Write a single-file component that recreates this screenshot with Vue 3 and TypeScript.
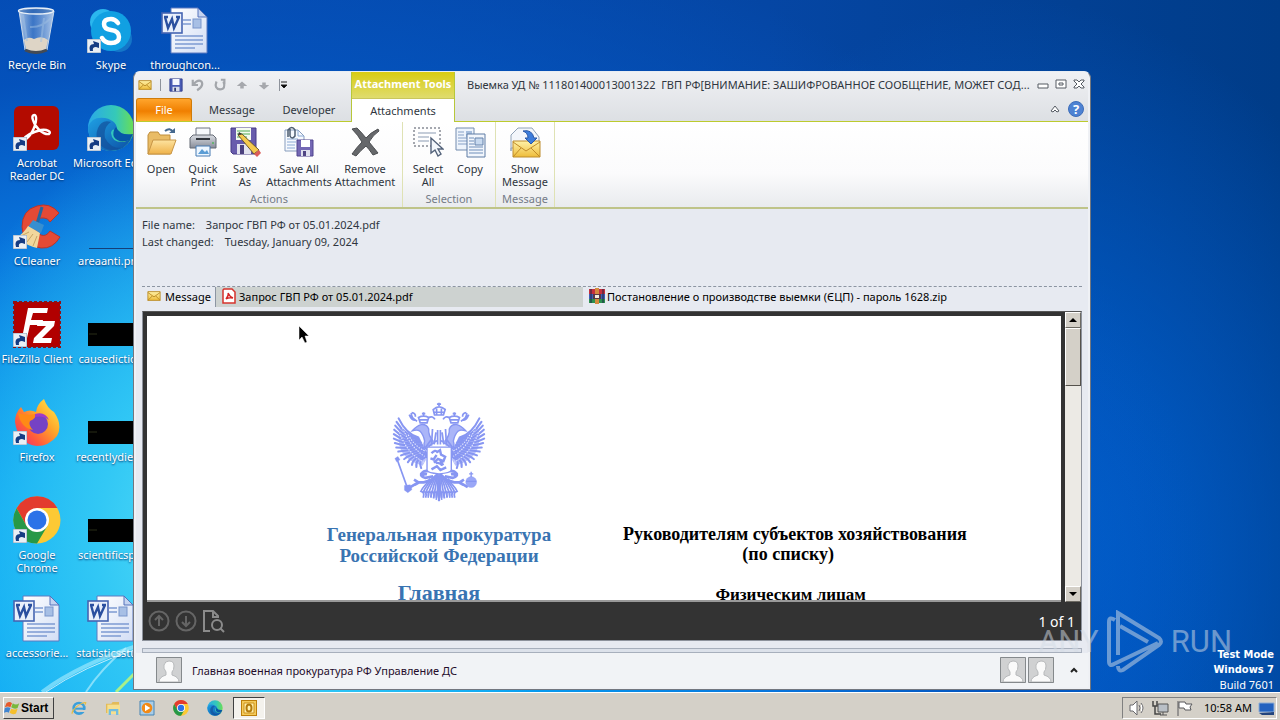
<script setup lang="ts">
interface Shortcut { icon: string; label: string; link?: boolean; col: number; row: number }
interface Tool { icon: string; lines: string[]; size?: string }
interface Group { name: string; tools: Tool[] }

const shortcuts: Shortcut[] = [
  { icon: 'bin', label: 'Recycle Bin', col: 1, row: 1 },
  { icon: 'acrobat', label: 'Acrobat Reader DC', link: true, col: 1, row: 2 },
  { icon: 'ccleaner', label: 'CCleaner', link: true, col: 1, row: 3 },
  { icon: 'filezilla', label: 'FileZilla Client', link: true, col: 1, row: 4 },
  { icon: 'firefox', label: 'Firefox', link: true, col: 1, row: 5 },
  { icon: 'chrome', label: 'Google Chrome', link: true, col: 1, row: 6 },
  { icon: 'word', label: 'accessorie...', col: 1, row: 7 },
  { icon: 'skype', label: 'Skype', link: true, col: 2, row: 1 },
  { icon: 'edge', label: 'Microsoft\u00a0Edge', link: true, col: 2, row: 2 },
  { icon: 'line', label: 'areaanti.png', col: 2, row: 3 },
  { icon: 'black', label: 'causediction', col: 2, row: 4 },
  { icon: 'black', label: 'recentlydiet...', col: 2, row: 5 },
  { icon: 'black', label: 'scientificsp...', col: 2, row: 6 },
  { icon: 'word', label: 'statisticsstu...', col: 2, row: 7 },
  { icon: 'word', label: 'throughcon...', col: 3, row: 1 },
]

const groups: Group[] = [
  {
    name: 'Actions',
    tools: [
      { icon: 'open', lines: ['Open'] },
      { icon: 'print', lines: ['Quick', 'Print'] },
      { icon: 'saveas', lines: ['Save', 'As'] },
      { icon: 'saveall', lines: ['Save All', 'Attachments'], size: 'wide' },
      { icon: 'remove', lines: ['Remove', 'Attachment'], size: 'wide' },
    ],
  },
  {
    name: 'Selection',
    tools: [
      { icon: 'select', lines: ['Select', 'All'] },
      { icon: 'copy', lines: ['Copy'] },
    ],
  },
  { name: 'Message', tools: [{ icon: 'show', lines: ['Show', 'Message'], size: 'mid' }] },
]

const pinned = ['ie', 'folder', 'media', 'chrome', 'edge']
const quick = ['undo', 'redo', 'up', 'down']
const feathers = [
  [72, 84], [66, 94], [62, 105], [59, 117], [58, 130], [58, 143], [61, 156], [65, 169],
  [71, 181], [79, 192], [88, 203], [99, 212], [111, 220], [124, 226], [138, 229],
]
const tail = [136, 143, 150, 158, 166, 174, 182, 189]
</script>

<template>
  <div class="desktop">
    <svg class="sprite" aria-hidden="true">
      <defs>
        <linearGradient id="gGlass" x1="0" x2="1"><stop offset="0" stop-color="#dfeaf5" stop-opacity=".8" /><stop offset=".4" stop-color="#7fa5d8" stop-opacity=".45" /><stop offset="1" stop-color="#dce8f6" stop-opacity=".8" /></linearGradient>
        <linearGradient id="gFox" x1="1" y1="0" x2="0" y2="1"><stop offset="0" stop-color="#fff44f" /><stop offset=".4" stop-color="#ffa62a" /><stop offset=".7" stop-color="#ff5a3c" /><stop offset="1" stop-color="#e8208a" /></linearGradient>
        <linearGradient id="gEdge" x1="0" y1="0" x2="1" y2="0"><stop offset="0" stop-color="#2aa9e8" /><stop offset=".6" stop-color="#35c9b8" /><stop offset="1" stop-color="#6ade55" /></linearGradient>
        <linearGradient id="gEdge2" x1="0" y1="0" x2="1" y2="1"><stop offset="0" stop-color="#1fa0e4" /><stop offset="1" stop-color="#0c50a4" /></linearGradient>
        <linearGradient id="gFold" x1="0" y1="0" x2="0" y2="1"><stop offset="0" stop-color="#fde3a0" /><stop offset="1" stop-color="#efb24a" /></linearGradient>
        <linearGradient id="gPage" x1="0" y1="0" x2="1" y2="1"><stop offset="0" stop-color="#fff" /><stop offset="1" stop-color="#d3def5" /></linearGradient>
        <linearGradient id="gEnv" x1="0" y1="0" x2="0" y2="1"><stop offset="0" stop-color="#fff2a8" /><stop offset="1" stop-color="#eebc3a" /></linearGradient>
        <linearGradient id="gGrey" x1="0" y1="0" x2="0" y2="1"><stop offset="0" stop-color="#d9dce2" /><stop offset="1" stop-color="#878c98" /></linearGradient>
      </defs>
      <symbol id="bin" viewBox="0 0 48 48">
        <path d="M6 5 12 44Q23 49 34 44L41 5Q23 0 6 5Z" fill="url(#gGlass)" stroke="#c9d9ea" />
        <path d="M11 34Q15 30 21 33 29 29 35 34L33 43Q23 48 13 43Z" fill="#ded5c6" />
        <path d="M12 44Q23 49 34 44" fill="none" stroke="#444b55" stroke-width="3" />
        <ellipse cx="23" cy="5" rx="17.500" ry="3" fill="#2b62ae" fill-opacity=".6" stroke="#e7eff7" stroke-width="1.400" />
        <path d="M10 9 14 35M38 12Q28 22 17 21M31 12 28 36" fill="none" stroke="#9fbfe2" stroke-width="2" opacity=".5" />
      </symbol>
      <symbol id="skype" viewBox="0 0 48 48">
        <circle cx="16" cy="16" r="13" fill="#2bb7ee" /><circle cx="32" cy="33" r="13" fill="#1476c8" />
        <circle cx="24" cy="25" r="20" fill="#11a0e2" />
        <path d="M31 17Q28 13 24 13 17 13 17 18 17 23 24 24 32 25 32 31 32 37 24 37 18 37 15 32" fill="none" stroke="#fff" stroke-width="4.500" stroke-linecap="round" />
      </symbol>
      <symbol id="word" viewBox="0 0 48 48">
        <path d="M10 2H37L46 11V47H10Z" fill="url(#gPage)" stroke="#5d7ac0" />
        <path d="M37 2V11H46Z" fill="#c4d3f0" stroke="#5572bb" />
        <path d="M22 14H30M22 18H30M14 30H42M14 34H42M14 38H42M14 42H34" stroke="#7e9bd2" stroke-width="1.500" />
        <rect x="32" y="13" width="8" height="9" fill="#a7bfe5" stroke="#7895cb" />
        <rect x="1" y="7" width="20" height="20" fill="#e9effb" stroke="#4565b2" stroke-width="1.600" />
        <path d="M4 11 7 22 11 13 13 22 18 11M3 11H7M15 11H19" fill="none" stroke="#2a4f9f" stroke-width="2.400" />
      </symbol>
      <symbol id="acrobat" viewBox="0 0 48 48">
        <rect x="1" y="2" width="45" height="44" rx="6" fill="#b30b00" />
        <path d="M13 35C19 31 24 19 23 13 22 9 18 11 20 16 23 25 31 31 36 30 39 28 34 25 28 26 20 28 12 32 10 36 10 39 12 37 14 34Z" fill="none" stroke="#fff" stroke-width="2.400" />
      </symbol>
      <symbol id="edge" viewBox="0 0 48 48">
        <circle cx="24" cy="24" r="23" fill="url(#gEdge)" />
        <path d="M1 23Q5 12 18 14 31 17 30 27 25 23 24 29 25 39 37 38L44 35Q37 48 22 47 2 44 1 23Z" fill="url(#gEdge2)" />
        <path d="M11 24Q15 15 24 18 16 23 18 34 23 44 34 44 19 50 11 38Q8 31 11 24Z" fill="#134d98" opacity=".65" />
        <path d="M29 23Q33 32 46 30L43 36Q32 40 27 33 25 28 29 23Z" fill="#0756a7" />
      </symbol>
      <symbol id="ccleaner" viewBox="0 0 48 48">
        <path d="M46 11Q37 0 24 4 9 8 9 25 10 44 28 46 40 47 47 35L37 29Q33 35 28 33 22 31 23 22 24 15 31 16 35 16 37 20Z" fill="#e44a35" stroke="#bc3328" />
        <path d="M29 5 24 22" stroke="#2366a0" stroke-width="3" /><path d="M20 18 31 23 28 31 15 25Z" fill="#378fd0" />
        <path d="M15 24 27 31 24 46Q15 44 3 36 11 31 15 24Z" fill="#f1d79c" /><path d="M8 34 16 30M14 40 20 32M20 44 24 34" stroke="#c7a563" />
      </symbol>
      <symbol id="filezilla" viewBox="0 0 48 48">
        <rect x="1" y="2" width="46" height="45" fill="#b10000" stroke="#8f1014" stroke-width="2" stroke-dasharray="3 2" />
        <path d="M9 38 15 8H35L34 13H20L18 20H30L29 25H17L14 38ZM25 21H42L41 26 29 38H39L38 43H20L21 38 33 26H24Z" fill="#fff" />
      </symbol>
      <symbol id="firefox" viewBox="0 0 48 48">
        <path d="M2 24Q2 15 8 9L11 14Q17 11 23 14 24 6 31 1 34 10 41 14 50 27 44 38 36 48 24 48 5 46 2 24Z" fill="url(#gFox)" />
        <circle cx="25" cy="26" r="10" fill="#7542c4" />
        <path d="M5 15Q14 18 22 16 24 20 17 23 15 27 20 32 8 30 5 15Z" fill="#ff8a16" />
        <path d="M22 16Q32 13 36 22 30 17 22 19Z" fill="#a13ac9" />
      </symbol>
      <symbol id="chrome" viewBox="0 0 48 48">
        <circle cx="24" cy="24" r="23.500" fill="#fcc934" />
        <path d="M24 24V12H44.400A23.500 23.500 0 0 0 3.600 12.200L13.600 30Z" fill="#e33b2e" />
        <path d="M3.600 12.200A23.500 23.500 0 0 0 24 47.500L34.400 30 13.600 30Z" fill="#279847" />
        <circle cx="24" cy="24" r="12" fill="#fff" /><circle cx="24" cy="24" r="9.500" fill="#2b72e8" />
      </symbol>
      <symbol id="black" viewBox="0 0 48 48"><path d="M1 23H48V46H1Z" /><path d="M2 34H10" stroke="#282d16" /></symbol>
      <symbol id="line" viewBox="0 0 48 48"><path d="M2 46.500H48" stroke="#153f78" /></symbol>
      <symbol id="shortcut" viewBox="0 0 14 14"><path d="M0 0H14V14H0Z" fill="#e9eff5" stroke="#90a4ba" /><path d="M3 12Q1 5 7 5L6 2 12 4 12 9 9 8Q5 8 6 12Z" fill="#153c83" /></symbol>

      <symbol id="envelope" viewBox="0 0 16 12"><path d="M1 1H15V11H1Z" fill="url(#gEnv)" stroke="#b98a24" /><path d="M1 2 8 7 15 2M1 11 6 6M15 11 10 6" fill="none" stroke="#b88922" /></symbol>
      <symbol id="floppy" viewBox="0 0 16 16"><path d="M1 1H15V15H1Z" fill="#4a5cb5" stroke="#2e3d8c" /><path d="M4 1H12V8H4Z" fill="#f5f7ff" /><path d="M4 10H12V15H4Z" fill="#d7dcea" /><path d="M6 11H8V15H6Z" fill="#303a71" /></symbol>
      <symbol id="undo" viewBox="0 0 16 16"><path d="M2 2V8H8M3 7Q8 1 12 4 15 9 7 14" fill="none" stroke="#a3a6ab" stroke-width="2.500" /></symbol>
      <symbol id="redo" viewBox="0 0 16 16"><path d="M9 2H13V7M12 4Q15 13 8 13 1 12 4 4" fill="none" stroke="#a3a6ab" stroke-width="2.500" /></symbol>
      <symbol id="up" viewBox="0 0 16 16"><path d="M8 4 14 9H10V12H6V9H2Z" fill="#a6a8ad" /></symbol>
      <symbol id="down" viewBox="0 0 16 16"><path d="M8 13 14 8H10V5H6V8H2Z" fill="#a6a8ad" /></symbol>

      <symbol id="open" viewBox="0 0 32 32">
        <path d="M3 28V9L5 6H13L15 9H25V28Z" fill="#e9bc66" stroke="#c08e3c" /><path d="M3 28 8 14H31L26 28Z" fill="url(#gFold)" stroke="#c79546" />
        <path d="M20 5Q25 1 28 6" fill="none" stroke="#46698f" stroke-width="2" /><path d="M24 7H30V2Z" fill="#46698f" />
      </symbol>
      <symbol id="print" viewBox="0 0 32 32">
        <path d="M9 2H23V13H9Z" fill="#f7f9fc" stroke="#6f7581" /><path d="M3 12 6 9H26L29 12V22H3Z" fill="url(#gGrey)" stroke="#656a75" />
        <path d="M9 13H23" stroke="#30343b" stroke-width="2" /><circle cx="26" cy="17" r="1" fill="#55b45e" />
        <path d="M9 20H23V30H9Z" fill="#edf6ff" stroke="#477bb3" /><path d="M11 28 15 23 18 26 20 24 22 28Z" fill="#5b9dd5" />
      </symbol>
      <symbol id="saveas" viewBox="0 0 32 32">
        <path d="M2 2H27V28H4L2 26Z" fill="#685cac" stroke="#473b86" /><path d="M7 2H22V14H7Z" fill="#f5fbef" /><path d="M8 5H21M8 8H21M8 11H18" stroke="#4eaa54" />
        <path d="M8 18H22V28H8Z" fill="#e2e3ef" /><path d="M11 19H15V28H11Z" fill="#4c427e" /><path d="M9 9 25 28 30 24 13 8Z" fill="#f5ca4d" stroke="#6c5930" /><path d="M25 28 28 31 32 27 30 24Z" fill="#db5d59" /><path d="m9 9 1-3 3 2Z" fill="#333" />
      </symbol>
      <symbol id="saveall" viewBox="0 0 32 32">
        <path d="M2 4H15L21 10V25H2Z" fill="#f6f9fe" stroke="#879dbd" /><path d="M15 4V10H21M4 13H15M4 16H13M4 19H12M4 22H12" fill="none" stroke="#8baad4" />
        <path d="M7 3V10Q9 14 12 10V4Q9 -1 5 4V11" fill="none" stroke="#4d5d70" stroke-width="1.500" />
        <path d="M14 14H30V30H14Z" fill="#7468b4" stroke="#51458e" /><path d="M18 14H27V21H18Z" fill="#fff" /><path d="M18 24H27V30H18Z" fill="#dfe0ed" /><path d="M20 25H23V30H20Z" fill="#504583" />
      </symbol>
      <symbol id="remove" viewBox="0 0 32 32"><path d="M3 3 8 2Q13 7 17 12 21 7 29 3L30 5Q24 9 20 16 25 22 29 27L24 29Q20 23 17 20 12 24 7 30L3 28Q8 21 13 16 9 9 3 3Z" fill="#66686b" stroke="#4b4d50" /></symbol>
      <symbol id="select" viewBox="0 0 32 32">
        <path d="M2 2H28V20H2Z" fill="none" stroke="#4c5360" stroke-dasharray="2 2" /><path d="M6 7H24M6 11H17M6 15H17" stroke="#8b9bb2" />
        <path d="M19 12V27L23 24 26 30 29 28 26 23H31Z" fill="#f2f6fb" stroke="#53627a" stroke-width="1.400" />
      </symbol>
      <symbol id="copy" viewBox="0 0 32 32">
        <path d="M2 2H20V24H2Z" fill="#eef4fc" stroke="#728bae" /><path d="M4 6H10M4 9H10M4 12H17M4 15H17M4 18H15" stroke="#86a0c6" /><path d="M12 5H18V11H12Z" fill="#a5bddd" />
        <path d="M13 8H31V31H13Z" fill="#f2f6fc" stroke="#5e7da5" /><path d="M15 12H20M15 15H20M15 18H20M15 21H29M15 24H29M15 27H29" stroke="#6f8eb9" /><path d="M21 12H29V19H21Z" fill="#c7d9ef" stroke="#6582ab" />
      </symbol>
      <symbol id="show" viewBox="0 0 32 32">
        <path d="M2 25V9L9 2H23L30 11V22H2Z" fill="#f3f6fb" stroke="#92a3b8" /><path d="M4 15H31V31H4Z" fill="url(#gEnv)" stroke="#bd8c2d" /><path d="M4 16 17 25 31 16M4 31 12 22M31 31 22 22" fill="none" stroke="#c08b28" />
        <path d="M14 5Q23 3 25 12H28L22 18 16 12H19Q19 7 14 5Z" fill="#3c7cdb" stroke="#2b58a7" />
      </symbol>
      <symbol id="pdf" viewBox="0 0 14 16"><path d="M2 1H10L13 4V15H1V2Z" fill="#fff" stroke="#d6332d" stroke-width="1.500" /><path d="M4 11Q7 7 6 5 8 9 11 10 7 9 4 11" fill="none" stroke="#d32323" stroke-width="1.500" /></symbol>
      <symbol id="rar" viewBox="0 0 16 16"><path d="M0 1H16V6H0Z" fill="#c5303f" /><path d="M0 6H16V11H0Z" fill="#3e5db5" /><path d="M0 11H16V15H0Z" fill="#2c9150" /><path d="M6 0H10V16H6Z" fill="#d48b3f" /><path d="M4 6H12V11H4Z" fill="#593844" /><path d="M6 7H10V10H6Z" fill="#f5efdf" /><path d="M2 1V15M14 1V15" stroke="#1e2544" /></symbol>
      <symbol id="person" viewBox="0 0 26 26"><path d="M0 0H26V26H0Z" fill="#d0d1d2" /><path d="M3 25Q3 20 10 18V15Q7 11 8 8 9 4 13 4 18 4 18 9 18 13 16 15V18Q23 20 23 25Z" fill="#fafafa" stroke="#b7b9bb" /><path d="M.500 .500H25.500V25.500H.500Z" fill="none" stroke="#85898c" /></symbol>
      <symbol id="flag" viewBox="0 0 20 20"><path d="M3 4Q7 1 10 4L8 9Q5 7 1 9Z" fill="#e6592b" /><path d="M11 4Q15 7 19 4L17 10Q13 12 9 9Z" fill="#79b83b" /><path d="M1 10Q5 8 8 10L6 16Q4 14 0 16Z" fill="#3f85d1" /><path d="M9 11Q13 13 17 11L15 17Q11 19 7 16Z" fill="#f5bf2c" /></symbol>
      <symbol id="ie" viewBox="0 0 48 48"><circle cx="24" cy="25" r="16" fill="none" stroke="#3b9fdb" stroke-width="8" /><path d="M11 26H42" stroke="#3b9fdb" stroke-width="6" /><path d="M30 30H45V36H30Z" fill="#d4d0c8" /><path d="M3 43Q-3 35 16 19 39 2 46 7 48 11 39 18 48 5 31 12 8 25 4 42Z" fill="#e7bd43" /></symbol>
      <symbol id="folder" viewBox="0 0 48 48"><path d="M3 11H19L23 6H42V39H3Z" fill="#e2bb59" /><path d="M7 14H45V42H7Z" fill="#f7df8e" /><path d="M11 27H40V45H33V34H18V45H11Z" fill="#72bde0" /></symbol>
      <symbol id="media" viewBox="0 0 48 48"><path d="M3 3H45V45H3Z" fill="#a9cde8" stroke="#4685b5" stroke-width="3" /><circle cx="24" cy="24" r="16" fill="#f28a17" /><path d="M18 14 34 24 18 34Z" fill="#fff" /></symbol>
      <symbol id="outlook" viewBox="0 0 16 16"><path d="M0 0H16V16H0Z" fill="#f4ca59" stroke="#bd800b" stroke-width="2" /><path d="M3 3H13V13H3Z" fill="#fff1af" stroke="#cc901c" /><ellipse cx="8" cy="8" rx="2.500" ry="3.500" fill="none" stroke="#b47b0b" stroke-width="2" /></symbol>
    </svg>

    <main class="workspace">
      <svg class="rays" viewBox="0 0 140 120" aria-hidden="true">
        <path d="M42 120Q80 92 140 73" stroke="#b8f2ff" stroke-width="4" fill="none" opacity=".55" />
        <path d="M46 120Q82 95 140 76" stroke="#fff" fill="none" opacity=".7" />
        <path d="M86 120Q100 98 126 76" stroke="#d2f7ff" stroke-width="2" fill="none" opacity=".55" />
        <path d="M116 120 140 96" stroke="#a9f08a" stroke-width="3" />
      </svg>

      <nav class="shortcuts" aria-label="Desktop">
        <button v-for="s in shortcuts" :key="s.label" type="button" class="shortcut" :style="{ gridColumn: s.col, gridRow: s.row }">
          <span class="pic">
            <svg class="i48"><use :href="'#' + s.icon" /></svg>
            <svg v-if="s.link" class="arrow"><use href="#shortcut" /></svg>
          </span>
          <span class="name">{{ s.label }}</span>
        </button>
      </nav>

      <div class="edition"><b>Test Mode</b><b>Windows 7</b><span>Build 7601</span></div>

      <section class="window" aria-label="Outlook message">
        <header class="chrome-top">
          <div class="left-top">
            <div class="quickbar">
              <svg class="mail"><use href="#envelope" /></svg>
              <span class="vline"></span>
              <button type="button" aria-label="Save"><svg class="i14"><use href="#floppy" /></svg></button>
              <button v-for="q in quick" :key="q" type="button" :aria-label="q"><svg class="i14"><use :href="'#' + q" /></svg></button>
              <span class="vline"></span>
              <button type="button" class="more" aria-label="Customize"><svg viewBox="0 0 8 8"><path d="M1 1H7M1 4H7L4 7Z" stroke="#222" /></svg></button>
            </div>
            <div class="tabs">
              <button type="button" class="file">File</button>
              <button type="button" class="tab message">Message</button>
              <button type="button" class="tab developer">Developer</button>
            </div>
          </div>
          <div class="context">
            <strong>Attachment Tools</strong>
            <button type="button">Attachments</button>
          </div>
          <div class="right-top">
            <div class="titlebar">
              <h1>Выемка УД № 111801400013001322 &nbsp;ГВП РФ[ВНИМАНИЕ: ЗАШИФРОВАННОЕ СООБЩЕНИЕ, МОЖЕТ СОД...</h1>
              <div class="controls">
                <button type="button" aria-label="Minimize"><svg viewBox="0 0 12 12"><path d="M1 6H11V10H1Z" fill="#fff" stroke="#555b63" /></svg></button>
                <button type="button" aria-label="Maximize"><svg viewBox="0 0 12 12"><path d="M1 2H11V10H1ZM4 5H8V7H4Z" fill="#fff" stroke="#555b63" /></svg></button>
                <button type="button" aria-label="Close"><svg viewBox="0 0 12 12"><path d="M1 2H4L6 4 8 2H11V3L8 6 11 9V10H8L6 8 4 10H1V9L4 6 1 3Z" fill="#fff" stroke="#555b63" /></svg></button>
              </div>
            </div>
            <div class="helpbar">
              <button type="button" aria-label="Collapse ribbon"><svg viewBox="0 0 10 10" class="i10"><path d="M1 7 5 2 9 7 7 8 5 6 3 8Z" fill="#fff" stroke="#555b63" /></svg></button>
              <button type="button" class="help" aria-label="Help">?</button>
            </div>
          </div>
        </header>

        <div class="ribbon">
          <section v-for="g in groups" :key="g.name" class="group">
            <div class="tools">
              <button v-for="t in g.tools" :key="t.icon" type="button" class="tool" :class="t.size">
                <svg class="i32"><use :href="'#' + t.icon" /></svg>
                <span v-for="l in t.lines" :key="l">{{ l }}</span>
              </button>
            </div>
            <h2>{{ g.name }}</h2>
          </section>
        </div>

        <div class="body">
          <dl class="info">
            <div><dt>File name:</dt><dd>Запрос ГВП РФ от 05.01.2024.pdf</dd></div>
            <div><dt>Last changed:</dt><dd>Tuesday, January 09, 2024</dd></div>
          </dl>
          <div class="attachments">
            <button type="button" class="att msg"><svg class="mail"><use href="#envelope" /></svg>Message</button>
            <button type="button" class="att pdf"><svg class="pdficon"><use href="#pdf" /></svg>Запрос ГВП РФ от 05.01.2024.pdf</button>
            <button type="button" class="att zip"><svg class="i16"><use href="#rar" /></svg>Постановление о производстве выемки (ЄЦП) - пароль 1628.zip</button>
          </div>

          <div class="preview">
            <div class="view">
              <article class="page">
                <div class="sender">
                  <svg class="emblem" viewBox="50 36 280 304" role="img" aria-label="Coat of arms">
                    <g fill="none" stroke="#8796f2">
                      <g v-for="side in 2" :key="side" :transform="side === 2 ? 'translate(380 0) scale(-1 1)' : undefined">
                        <path d="M76 110Q88 140 128 150L152 205 142 222Q100 212 80 180 66 150 76 110Z" fill="#b9c2fb" stroke="none" />
                        <path v-for="(f, i) in feathers" :key="i" :d="`M${130 + i * 2} ${140 + i * 4}Q${(f[0] + 132) / 2 - 8} ${(f[1] + 155) / 2 + 10} ${f[0]} ${f[1]}`" stroke-width="6" stroke-linecap="round" />
                        <path d="M84 112Q104 165 148 195M75 125Q92 180 145 212M100 132Q118 165 150 180" stroke="#eef0ff" stroke-width="3" stroke-dasharray="4 4" />
                        <path d="M174 152Q158 134 160 115 154 100 138 102 125 105 112 120 127 116 134 121 144 131 148 150 142 169 155 175" fill="#aab5f8" stroke-width="4" />
                        <path d="M135 97 130 81Q145 73 160 81L155 97ZM145 76V66M140 70H150M134 88H156" stroke-width="5" />
                        <path d="M159 82Q172 75 178 87M126 92Q108 83 109 68M103 73Q111 92 121 88M110 67Q122 68 121 79" stroke-width="5" />
                        <path d="M168 164 171 115M176 160 181 125M159 166 184 149M150 170 168 145M186 160V118" stroke-width="5" />
                        <path d="M160 238Q147 235 138 246 136 254 151 258L173 253M166 261Q153 273 130 271L106 285M130 271 117 263M132 271 119 278M155 247Q145 245 141 251" stroke-width="8" />
                        <path v-for="t in tail" :key="t" :d="`M186 246Q${t + 7} 280 ${t} ${300 + (t - 138) / 2}M${t} 298Q${t + 13} 296 ${t + 8} 316`" stroke-width="5" />
                      </g>
                      <path d="M177 74 173 58Q190 43 208 58L203 74ZM190 48V38M184 42H196M175 66H205M183 73V55M197 73V55" stroke-width="5" />
                      <path d="M155 168H226V235Q224 243 190 246 156 243 155 235Z" fill="#fff" stroke-width="4" />
                      <path d="M168 186Q179 174 185 182L193 177 196 190 208 196 203 209 187 202 175 213M183 191 174 204 165 201M193 205 202 221M168 233 184 224 194 235 211 227M180 215Q191 211 199 221" stroke-width="7" />
                      <path d="M66 199 99 291" stroke-width="5" /><path d="M61 201 70 195 76 205 66 211ZM89 280 106 278 111 292 99 301 89 294Z" fill="#8796f2" />
                      <circle cx="284" cy="270" r="16" fill="#9aa7f7" /><path d="M269 268H299M284 255V240M278 246H290" stroke-width="4" />
                    </g>
                  </svg>
                  <p>Генеральная прокуратура<br>Российской Федерации</p>
                  <p class="big">Главная</p>
                </div>
                <div class="addressee">
                  <p>Руководителям субъектов хозяйствования<br>(по списку)&nbsp;&nbsp;&nbsp;</p>
                  <p class="small">Физическим лицам&nbsp;&nbsp;</p>
                </div>
              </article>
              <div class="scroll">
                <button type="button" aria-label="Scroll up"><svg viewBox="0 0 8 8"><path d="M0 6 4 2 8 6Z" /></svg></button>
                <span class="thumb"></span><span class="track"></span>
                <button type="button" aria-label="Scroll down"><svg viewBox="0 0 8 8"><path d="M0 2 4 6 8 2Z" /></svg></button>
              </div>
            </div>
            <footer class="pager">
              <button type="button" aria-label="Previous page"><svg viewBox="0 0 24 24"><circle cx="12" cy="12" r="9.500" /><path d="M12 17V7M8 11 12 7 16 11" /></svg></button>
              <button type="button" aria-label="Next page"><svg viewBox="0 0 24 24"><circle cx="12" cy="12" r="9.500" /><path d="M12 7V17M8 13 12 17 16 13" /></svg></button>
              <button type="button" class="find" aria-label="Find"><svg viewBox="0 0 24 24"><path d="M9 22H3V2H12L17 7V9M12 2V8H17" /><circle cx="16" cy="16" r="5" /><path d="M19 19 23 23" /></svg></button>
              <output>1 of 1</output>
            </footer>
          </div>
          <div class="splitter"></div>
        </div>

        <footer class="people">
          <svg class="i26"><use href="#person" /></svg>
          <span class="who">Главная военная прокуратура РФ Управление ДС</span>
          <svg class="i26"><use href="#person" /></svg>
          <svg class="i26"><use href="#person" /></svg>
          <button type="button" aria-label="Expand people pane"><svg viewBox="0 0 8 8"><path d="M1 6 4 3 7 6" fill="none" stroke="#222" stroke-width="2" /></svg></button>
        </footer>
      </section>

      <svg class="pointer" viewBox="0 0 12 19" aria-hidden="true"><path d="M1 1V15L4 12 7 18 9 17 7 11H11Z" stroke="#fff" stroke-width=".500" /></svg>
      <div class="watermark" aria-label="ANY RUN">
        <span>ANY</span>
        <svg viewBox="0 0 58 64"><path d="M9 10Q3 6 3 12V51Q3 57 8 54L52 33M12 45V3L53 28Q57 32 53 35L17 60Q12 62 12 56M14 16 42 32" fill="none" stroke="currentColor" stroke-width="4" /></svg>
        <span>RUN</span>
      </div>
    </main>

    <footer class="taskbar">
      <button type="button" class="start"><svg class="i16"><use href="#flag" /></svg>Start</button>
      <nav class="pins">
        <button v-for="p in pinned" :key="p" type="button" :aria-label="p"><svg class="i16"><use :href="'#' + p" /></svg></button>
        <button type="button" class="pressed" aria-label="Outlook"><svg class="i16"><use href="#outlook" /></svg></button>
      </nav>
      <div class="tray">
        <svg viewBox="0 0 18 16"><path d="M2 5H5L9 1V15L5 11H2ZM11 5Q13 8 11 11M13 3Q17 8 13 13" fill="#fff" stroke="#68686c" /></svg>
        <svg viewBox="0 0 18 16"><path d="M6 4H16V12H6ZM8 15H15M11 12V15" fill="#b9bfc6" stroke="#555" /><path d="M1 1V6H5V1M3 6V14H9" fill="none" stroke="#444" stroke-width="1.500" /></svg>
        <svg viewBox="0 0 18 16"><path d="M2 1V16M3 2H9L10 4H16L14 7 15 10H9L8 8H3Z" fill="#fff" stroke="#58595c" /></svg>
        <time>10:58 AM</time>
        <svg viewBox="0 0 18 16"><path d="M1 3H16V12H1Z" fill="#2362bf" stroke="#8eacd4" /><path d="M1 13 16 12V15H4Z" fill="#23447d" /></svg>
      </div>
    </footer>
  </div>
</template>

<style>
body { overflow: hidden; background: #004a9f; }
</style>

<style scoped>
* { box-sizing: border-box; }
.desktop { display: flex; flex-direction: column; height: 100vh; font: 11px/13px "Noto Sans", sans-serif; color: #2f3640; }
button { padding: 0; border: 0; background: none; font: inherit; color: inherit; }
svg { display: block; flex: none; }
h1, h2, p, dl, dd { margin: 0; font: inherit; }
.sprite { position: absolute; width: 0; height: 0; }
.i48 { width: 48px; height: 48px; }
.i32 { width: 32px; height: 32px; }
.i26 { width: 26px; height: 26px; }
.i16 { width: 16px; height: 16px; }
.i14 { width: 14px; height: 14px; }
.i10 { width: 10px; height: 10px; }
.mail { width: 14px; height: 12px; }

.workspace {
  position: relative; flex: 1; min-height: 0; overflow: hidden;
  background:
    radial-gradient(ellipse 330px 420px at 230px 540px, #5ce2f7 0%, #32c8f5 40%, rgba(16, 165, 242, 0) 100%),
    radial-gradient(ellipse 1000px 760px at 220px 640px, #08aaf5 0%, #06a0f2 28%, #0874dc 56%, rgba(4, 84, 190, .8) 76%, rgba(4, 70, 168, 0) 100%),
    radial-gradient(ellipse 420px 560px at 1020px 560px, #0068d8 0%, rgba(0, 96, 208, .8) 30%, rgba(0, 80, 180, 0) 100%),
    linear-gradient(90deg, #0548b0 0%, #0546a4 60%, #003c88 100%);
}
.rays { position: absolute; left: 0; bottom: 0; width: 140px; height: 120px; }
.shortcuts { display: grid; grid-template-columns: repeat(3, 74px); grid-auto-rows: 98px; padding-top: 6px; width: 222px; }
.shortcut { display: flex; flex-direction: column; align-items: center; justify-content: flex-start; gap: 4px; color: #fff; text-shadow: 0 1px 2px #00306c; }
.pic { position: relative; }
.arrow { position: absolute; left: 0; bottom: 1px; width: 14px; height: 14px; }
.name { max-width: 76px; }
.edition { position: absolute; right: 6px; bottom: 0; display: flex; flex-direction: column; text-align: right; color: #fff; line-height: 15px; }
.edition b { font-family: "DejaVu Sans Condensed", "DejaVu Sans", sans-serif; }

.window {
  position: absolute; left: 133px; right: 189px; top: 71px; bottom: 2px; display: flex; flex-direction: column; padding: 0 2px 2px;
  border: 1px solid #73777f; border-top-color: #e8edf4; border-radius: 7px 7px 0 0; background: #eff1f5; overflow: hidden;
}
.chrome-top { display: flex; height: 50px; background: linear-gradient(#f0f1f4, #dcdfe3); }
.left-top { width: 215px; border-bottom: 1px solid #bccb2e; }
.quickbar { display: flex; align-items: center; height: 26px; gap: 8px; padding-left: 2px; }
.vline { width: 1px; height: 12px; background: #8d929b; }
.more svg { width: 8px; height: 8px; }
.quickbar .more { margin-left: -8px; }
.tabs { display: flex; height: 23px; }
.tabs button { display: grid; place-items: center; padding-bottom: 1px; }
.tabs .file { width: 56px; border: 1px solid #cf7b09; border-bottom: 0; border-radius: 3px 3px 0 0; background: linear-gradient(#ffa52c, #f07f00 55%, #ffae2e); color: #fff; }
.message { width: 80px; }
.developer { width: 74px; }
.context { width: 104px; border: 1px solid #b7c73a; border-width: 0 1px; background: #fff; display: flex; flex-direction: column; }
.context strong { height: 27px; display: grid; place-items: center; padding-bottom: 4px; background: linear-gradient(#d9cc12, #dfdc6e); color: #fff; font-size: 11px; white-space: nowrap; border-bottom: 1px solid #c9c65e; }
.context button { flex: 1; }
.right-top { flex: 1; min-width: 0; border-bottom: 1px solid #bccb2e; }
.titlebar { display: flex; align-items: center; height: 24px; padding: 0 3px 0 12px; gap: 4px; }
h1 { flex: 1; min-width: 0; white-space: nowrap; }
.controls { display: flex; gap: 6px; }
.controls svg { width: 12px; height: 12px; }
.helpbar { display: flex; justify-content: flex-end; align-items: center; gap: 8px; height: 26px; padding-right: 4px; }
.help { width: 16px; height: 16px; border: 1px solid #3d6db9; border-radius: 50%; background: #4d82d3; color: #fff; font: bold 13px/13px "Noto Sans", sans-serif; }

.ribbon { display: flex; height: 87px; background: linear-gradient(#fff, #fbfbfc 60%, #e9ebee); border-bottom: 2px solid #bfc489; }
.group { display: flex; flex-direction: column; justify-content: space-between; padding: 4px 4px 2px; border-right: 1px solid #dfe2b4; }
.tools { display: flex; }
.tool { display: flex; flex-direction: column; align-items: center; width: 42px; }
.tool svg { margin-bottom: 4px; }
.tool.wide { width: 66px; }
.tool.mid { width: 50px; }
.tool span { white-space: nowrap; }
h2 { text-align: center; color: #747b87; }

.body { flex: 1; min-height: 0; display: flex; flex-direction: column; padding: 7px 6px 0; background: #e7eaf1; }
.info { height: 70px; line-height: 17px; }
.info div { display: flex; gap: 11px; }
.attachments { display: flex; height: 21px; margin-bottom: 4px; border-top: 1px dashed #8c95a2; color: #000; }
.att { display: flex; align-items: center; padding-bottom: 2px; white-space: nowrap; }
.attachments .msg { width: 74px; gap: 4px; padding-left: 5px; border-right: 1px solid #8c95a2; }
.attachments .pdf { width: 367px; gap: 3px; padding-left: 6px; background: #cdd2d0; }
.pdficon { width: 14px; height: 16px; }
.attachments .zip { gap: 2px; padding-left: 6px; }
.preview { flex: 1; min-height: 0; display: flex; flex-direction: column; border: 1px solid #8d929c; border-top-color: #555; background: #333; }
.view { flex: 1; min-height: 0; display: flex; gap: 4px; padding-left: 4px; }
.page { flex: 1; min-width: 0; display: grid; grid-template-columns: 584px 1fr; margin-top: 4px; border-bottom: 2px solid #999; background: #fff; overflow: hidden; font: bold 18px/20px "Liberation Serif", serif; text-align: center; }
.sender { color: #3974b2; padding-top: 86px; font-size: 19px; line-height: 21px; }
.emblem { width: 96px; height: 104px; margin: 0 auto 18px; }
.sender .big { margin-top: 15px; font-size: 22px; line-height: 24px; }
.addressee { padding-top: 208px; color: #000; justify-self: start; margin-left: -108px; }
.addressee p { margin-bottom: 21px; }
.addressee .small { font-size: 17px; }
.scroll { width: 16px; display: flex; flex-direction: column; background: #eceae5; }
.scroll button { display: grid; place-items: center; height: 16px; background: #d4d0c8; border: 1px solid; border-color: #fff #6c6962 #6c6962 #fff; }
.scroll svg { width: 8px; height: 8px; }
.thumb { height: 58px; background: #d4d0c8; border: 1px solid; border-color: #fff #55524c #55524c #fff; }
.track { flex: 1; }
.pager { display: flex; align-items: center; height: 38px; gap: 3px; padding: 0 6px 0 4px; color: #fff; }
.pager svg { width: 24px; height: 24px; fill: none; stroke: #656565; stroke-width: 2; }
.pager .find svg { stroke: #8b8b8b; }
.pager output { margin-left: auto; font-size: 14px; }
.splitter { height: 5px; margin: 7px 0 0; border: 1px solid #a7afbc; background: #dce1ea; }
.people { display: flex; align-items: center; gap: 2px; height: 34px; padding: 0 8px 0 20px; background: #f1f3f6; color: #250d2b; }
.who { flex: 1; padding-left: 8px; }
.people button { width: 12px; margin-left: 12px; }
.people button svg { width: 8px; height: 8px; margin: auto; }

.pointer { position: absolute; left: 298px; top: 325px; width: 12px; height: 19px; }
.watermark { position: absolute; right: 48px; bottom: 18px; display: flex; align-items: center; gap: 7px; opacity: .5; color: #d5dde6; font: 31px/64px Roboto, sans-serif; pointer-events: none; }
.watermark svg { width: 58px; height: 64px; }

.taskbar { display: flex; align-items: center; height: 28px; padding: 2px 3px 0; background: #d4d0c8; border-top: 1px solid #fff; color: #000; }
.start { display: flex; align-items: center; gap: 1px; width: 51px; height: 22px; border: 1px solid; border-color: #fff #404040 #404040 #fff; font: bold 12px/16px "Liberation Sans", sans-serif; }
.pins { display: flex; align-items: center; gap: 2px; margin-left: 9px; }
.pins button { display: grid; place-items: center; width: 32px; height: 22px; }
.pins .pressed { border: 1px solid; border-color: #404040 #fff #fff #404040; background: #f4f2ed; }
.tray { display: flex; align-items: center; gap: 6px; height: 22px; margin-left: auto; padding: 0 0 0 5px; border: 1px solid; border-color: #808080 #fff #fff #808080; }
.tray svg { width: 18px; height: 16px; }
.tray time { margin-left: 4px; }
</style>
